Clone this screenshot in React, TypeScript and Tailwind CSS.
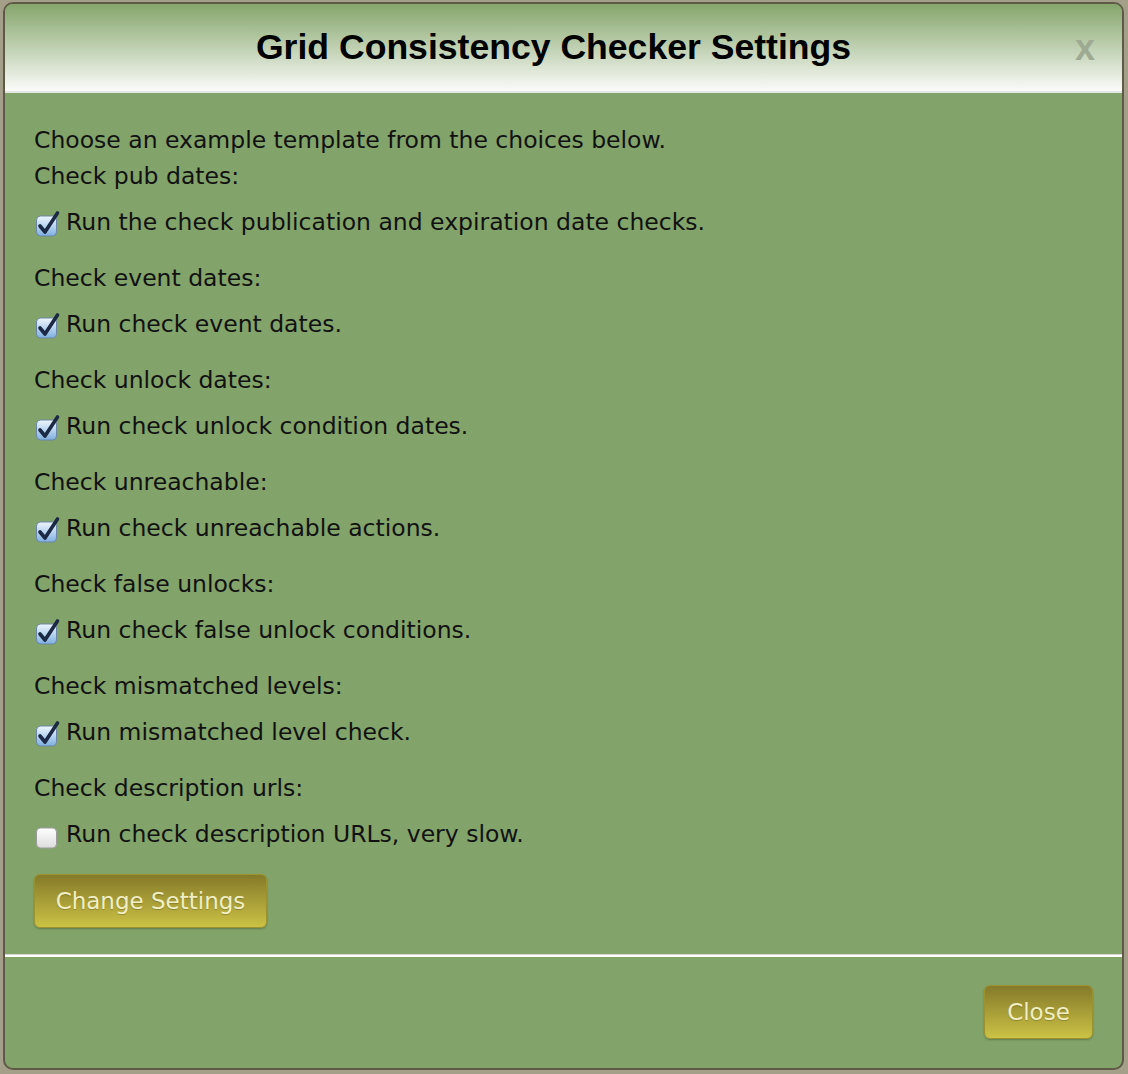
const options = [
  { label: "Check pub dates:", text: "Run the check publication and expiration date checks.", checked: true },
  { label: "Check event dates:", text: "Run check event dates.", checked: true },
  { label: "Check unlock dates:", text: "Run check unlock condition dates.", checked: true },
  { label: "Check unreachable:", text: "Run check unreachable actions.", checked: true },
  { label: "Check false unlocks:", text: "Run check false unlock conditions.", checked: true },
  { label: "Check mismatched levels:", text: "Run mismatched level check.", checked: true },
  { label: "Check description urls:", text: "Run check description URLs, very slow.", checked: false },
];

function Checkbox({ checked }: { checked: boolean }) {
  return (
    <svg width="26" height="26" viewBox="0 0 26 26" className="shrink-0 overflow-visible">
      <defs>
        <linearGradient id="cbOn" x1="0" y1="0" x2="0" y2="1">
          <stop offset="0" stopColor="#eef5fc" />
          <stop offset="0.5" stopColor="#b9d5f0" />
          <stop offset="1" stopColor="#7eaee0" />
        </linearGradient>
        <linearGradient id="cbOff" x1="0" y1="0" x2="0" y2="1">
          <stop offset="0" stopColor="#ffffff" />
          <stop offset="1" stopColor="#dcdcdc" />
        </linearGradient>
      </defs>
      <rect
        x="2.5"
        y="6"
        width="20"
        height="20"
        rx="4"
        fill={checked ? "url(#cbOn)" : "url(#cbOff)"}
        stroke={checked ? "#6b86a6" : "#9b9b9b"}
      />
      {checked && (
        <path
          d="M6 16 L11 22 L23.5 3"
          fill="none"
          stroke="#1b2945"
          strokeWidth="3.6"
          strokeLinecap="round"
          strokeLinejoin="round"
        />
      )}
    </svg>
  );
}

function OliveButton({ children, className }: { children: string; className?: string }) {
  return (
    <button
      className={
        "h-[54px] rounded-[6px] border border-[#9c9230] bg-gradient-to-b from-[#857a2a] to-[#cbc245] text-[23px] text-[#f1eec4] shadow-[0_1px_2px_rgba(0,0,0,0.25)] [text-shadow:0_1px_1px_rgba(0,0,0,0.2)] " +
        (className ?? "")
      }
    >
      {children}
    </button>
  );
}

export default function App() {
  return (
    <div className="min-h-[1074px] w-[1128px] overflow-hidden bg-[#a39f88] pt-[2px] pl-[3px] font-['DejaVu_Sans',sans-serif]">
      <div className="flex h-[1068px] w-[1121px] flex-col overflow-hidden rounded-[10px] border-2 border-[#5f5a47] bg-[#82a369]">
        <div className="relative flex h-[87px] shrink-0 items-center justify-center bg-gradient-to-b from-[#86a66c] to-[#fbfbf9] pr-[20px]">
          <h1 className="font-['Liberation_Sans',Arial,sans-serif] text-[35.6px] font-bold text-black">
            Grid Consistency Checker Settings
          </h1>
          <span className="absolute right-[27px] top-[26px] font-['Liberation_Sans',Arial,sans-serif] text-[36px] font-bold leading-none text-[#9eab92]">
            x
          </span>
        </div>
        <div className="h-[2px] shrink-0 bg-[#e4e6e2]" />

        <div className="flex flex-1 flex-col pl-[29px] pt-[29px] text-[23.5px] text-[#111]">
          <div className="leading-[36px]">Choose an example template from the choices below.</div>
          {options.map((o, i) => (
            <div key={i} className={i === 0 ? "" : "mt-[19px]"}>
              <div className="leading-[36px]">{o.label}</div>
              <label className="mt-[11px] flex h-[36px] items-center gap-[6px]">
                <Checkbox checked={o.checked} />
                <span>{o.text}</span>
              </label>
            </div>
          ))}
          <div className="mt-[21px]">
            <OliveButton className="w-[233px]">Change Settings</OliveButton>
          </div>
        </div>

        <div className="mt-[25px] h-px shrink-0 bg-[#d6d8d4]" />
        <div className="h-[2px] shrink-0 bg-white" />

        <div className="flex h-[111px] shrink-0 justify-end pr-[29px] pt-[28px]">
          <OliveButton className="w-[109px]">Close</OliveButton>
        </div>
      </div>
    </div>
  );
}
